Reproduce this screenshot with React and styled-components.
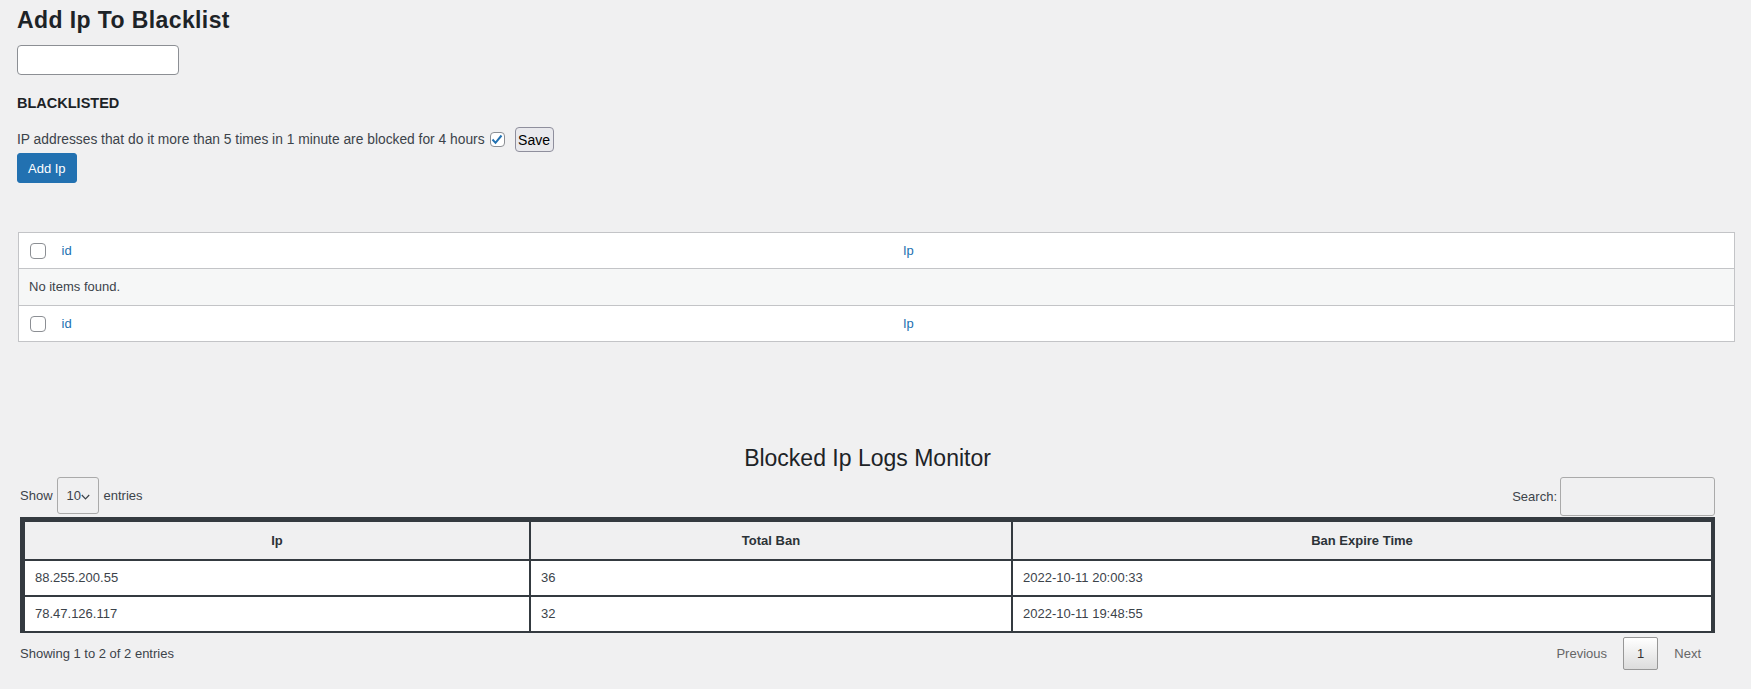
import React from 'react';
import styled, { createGlobalStyle } from 'styled-components';

const GlobalStyle = createGlobalStyle`
  *, *::before, *::after { box-sizing: border-box; }
  html, body {
    margin: 0;
    padding: 0;
    background: #f0f0f1;
  }
  body {
    font-family: "Liberation Sans", Arial, sans-serif;
    font-size: 13px;
    color: #3c434a;
  }
`;

const Page = styled.div`
  padding: 0 16px 20px 17px;
`;

const PageTitle = styled.h1`
  margin: 0;
  padding-top: 6px;
  font-size: 23px;
  line-height: 29px;
  font-weight: 700;
  letter-spacing: 0.4px;
  color: #1d2327;
`;

const IpInput = styled.input`
  display: block;
  margin-top: 10px;
  width: 162px;
  height: 30px;
  padding: 0 8px;
  border: 1px solid #8c8f94;
  border-radius: 4px;
  background: #fff;
  font: inherit;
`;

const SectionLabel = styled.h2`
  margin: 18px 0 0;
  font-size: 14.5px;
  line-height: 20px;
  font-weight: 700;
  color: #1d2327;
`;

const SettingRow = styled.div`
  display: flex;
  align-items: center;
  height: 25px;
  margin-top: 14px;
`;

const SettingText = styled.span`
  font-size: 13.8px;
  color: #3c434a;
`;

const CheckBox = styled.span`
  display: ${(p) => (p.$block ? 'flex' : 'inline-flex')};
  align-items: center;
  justify-content: center;
  flex: none;
  width: ${(p) => p.$size}px;
  height: ${(p) => p.$size}px;
  margin-left: ${(p) => p.$gap || 0}px;
  border: 1px solid #8c8f94;
  border-radius: 4px;
  background: #fff;
`;

const SaveButton = styled.button`
  margin-left: 10px;
  height: 25px;
  width: 39px;
  padding: 0;
  border: 1px solid #8f8f9d;
  border-radius: 4px;
  background: #e9e9ed;
  color: #000;
  font-family: "Liberation Sans", Arial, sans-serif;
  font-size: 14px;
  font-weight: 400;
`;

const PrimaryButton = styled.button`
  display: block;
  margin-top: 1px;
  height: 30px;
  padding: 0 10px;
  border: 1px solid #2271b1;
  border-radius: 3px;
  background: #2271b1;
  color: #fff;
  font-family: "Liberation Sans", Arial, sans-serif;
  font-size: 13px;
  font-weight: 400;
`;

const ListTable = styled.table`
  width: calc(100% - 1px);
  margin: 49px 0 0 1px;
  table-layout: fixed;
  border-collapse: collapse;
  border: 1px solid #c3c4c7;
  background: #fff;
`;

const ListRow = styled.tr`
  background: ${(p) => (p.$alt ? '#f6f7f7' : '#fff')};
  border-bottom: 1px solid #c3c4c7;
`;

const ListCell = styled.td`
  padding: ${(p) => (p.$tall ? '9px 10px' : '8px 10px')};
  line-height: ${(p) => (p.$tall ? '18px' : '19px')};
  vertical-align: middle;
  color: #3c434a;
  &.cb {
    width: 33px;
    padding: 1px 0 0 11px;
  }
`;

const SortLink = styled.a`
  color: #2271b1;
  text-decoration: none;
`;

const LogsSection = styled.section`
  margin: 0 20px 0 3px;
`;

const LogsTitle = styled.h2`
  margin: 102px 0 0;
  text-align: center;
  font-size: 23px;
  line-height: 28px;
  font-weight: 400;
  color: #1d2327;
`;

const Controls = styled.div`
  display: flex;
  justify-content: space-between;
  align-items: flex-start;
  margin-top: 5px;
`;

const ControlGroup = styled.label`
  display: flex;
  align-items: center;
  color: #3c434a;
`;

const LengthSelect = styled.span`
  display: inline-flex;
  align-items: center;
  width: 42px;
  height: 37px;
  margin: 0 5px 0 4px;
  padding-left: 9px;
  border: 1px solid #aaa;
  border-radius: 3px;
  color: #3c434a;
`;

const SearchText = styled.span`
  margin-right: 3px;
`;

const SearchInput = styled.input`
  width: 155px;
  height: 39px;
  border: 1px solid #aaa;
  border-radius: 3px;
  background: transparent;
`;

const LogTable = styled.table`
  width: 100%;
  margin-top: 1px;
  table-layout: fixed;
  border-collapse: separate;
  border-spacing: 0;
  border-style: solid;
  border-color: #343a40;
  border-width: 4px 3px 1px 4px;
`;

const HeadCell = styled.th`
  width: ${(p) => (p.$w ? `${p.$w}px` : 'auto')};
  padding: 10px;
  line-height: 17px;
  border: 1px solid #343a40;
  font-weight: 700;
  text-align: center;
  color: #2c3338;
`;

const BodyCell = styled.td`
  padding: 8px 10px;
  line-height: 18px;
  border: 1px solid #343a40;
  background: #fff;
  color: #3c434a;
`;

const TableFooter = styled.div`
  display: flex;
  justify-content: space-between;
  align-items: flex-start;
`;

const Info = styled.div`
  margin-top: 12px;
  line-height: 18px;
`;

const Pager = styled.div`
  display: flex;
  margin-top: 4px;
`;

const PageButton = styled.span`
  margin-left: 2px;
  padding: 6.5px 13px;
  line-height: 18px;
  border: 1px solid ${(p) => (p.$current ? '#979797' : 'transparent')};
  border-radius: 2px;
  background: ${(p) => (p.$current ? 'linear-gradient(to bottom, #fff 0%, #dcdcdc 100%)' : 'none')};
  color: ${(p) => (p.$current ? '#333' : '#666')};
`;

const CheckMark = () => (
  <svg width="12" height="11" viewBox="0 0 12 11">
    <path d="M1.5 5.5 L4.5 8.8 L10.5 1.5" fill="none" stroke="#2271b1" strokeWidth="2" />
  </svg>
);

const Chevron = () => (
  <svg width="9" height="6" viewBox="0 0 9 6" style={{ marginTop: 3 }}>
    <path d="M0.8 1 L4.5 4.8 L8.2 1" fill="none" stroke="#3c434a" strokeWidth="1.2" />
  </svg>
);

const logs = [
  { ip: '88.255.200.55', total: 36, expire: '2022-10-11 20:00:33' },
  { ip: '78.47.126.117', total: 32, expire: '2022-10-11 19:48:55' },
];

const HeadRow = () => (
  <ListRow>
    <ListCell className="cb"><CheckBox $size={16} $block /></ListCell>
    <ListCell><SortLink href="#">id</SortLink></ListCell>
    <ListCell><SortLink href="#">Ip</SortLink></ListCell>
  </ListRow>
);

const App = () => (
  <Page>
    <GlobalStyle />
    <PageTitle>Add Ip To Blacklist</PageTitle>
    <IpInput type="text" />
    <SectionLabel>BLACKLISTED</SectionLabel>
    <SettingRow>
      <SettingText>IP addresses that do it more than 5 times in 1 minute are blocked for 4 hours</SettingText>
      <CheckBox $size={15} $gap={5}><CheckMark /></CheckBox>
      <SaveButton>Save</SaveButton>
    </SettingRow>
    <PrimaryButton>Add Ip</PrimaryButton>

    <ListTable>
      <thead><HeadRow /></thead>
      <tbody>
        <ListRow $alt>
          <ListCell $tall colSpan={3}>No items found.</ListCell>
        </ListRow>
      </tbody>
      <tfoot><HeadRow /></tfoot>
    </ListTable>

    <LogsSection>
      <LogsTitle>Blocked Ip Logs Monitor</LogsTitle>
      <Controls>
        <ControlGroup>
          Show
          <LengthSelect>10<Chevron /></LengthSelect>
          entries
        </ControlGroup>
        <ControlGroup>
          <SearchText>Search:</SearchText>
          <SearchInput type="search" />
        </ControlGroup>
      </Controls>
      <LogTable>
        <thead>
          <tr>
            <HeadCell $w={506}>Ip</HeadCell>
            <HeadCell $w={482}>Total Ban</HeadCell>
            <HeadCell>Ban Expire Time</HeadCell>
          </tr>
        </thead>
        <tbody>
          {logs.map((row) => (
            <tr key={row.ip}>
              <BodyCell>{row.ip}</BodyCell>
              <BodyCell>{row.total}</BodyCell>
              <BodyCell>{row.expire}</BodyCell>
            </tr>
          ))}
        </tbody>
      </LogTable>
      <TableFooter>
        <Info>Showing 1 to 2 of 2 entries</Info>
        <Pager>
          <PageButton>Previous</PageButton>
          <PageButton $current>1</PageButton>
          <PageButton>Next</PageButton>
        </Pager>
      </TableFooter>
    </LogsSection>
  </Page>
);

export default App;
